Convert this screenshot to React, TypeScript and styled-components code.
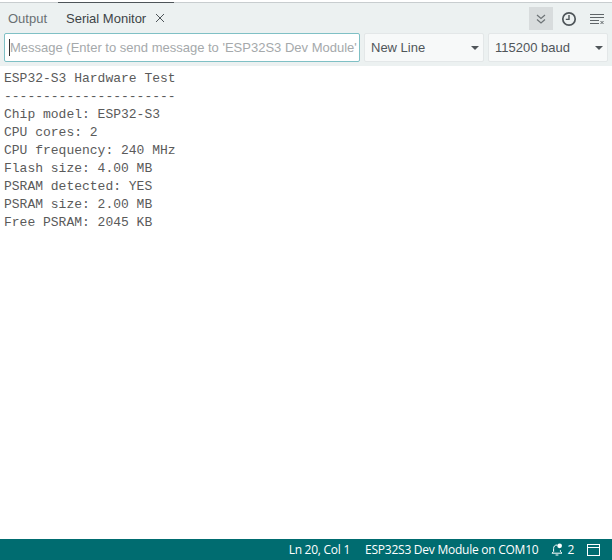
import { createGlobalStyle } from "styled-components";
import styled from "styled-components";

const lines = [
  "ESP32-S3 Hardware Test",
  "----------------------",
  "Chip model: ESP32-S3",
  "CPU cores: 2",
  "CPU frequency: 240 MHz",
  "Flash size: 4.00 MB",
  "PSRAM detected: YES",
  "PSRAM size: 2.00 MB",
  "Free PSRAM: 2045 KB",
];

const Global = createGlobalStyle`
  html, body {
    margin: 0;
    padding: 0;
    background: #fff;
  }
  * {
    box-sizing: border-box;
  }
`;

const Page = styled.div`
  width: 612px;
  height: 560px;
  display: flex;
  flex-direction: column;
  overflow: hidden;
  font-family: "Liberation Sans", Arial, sans-serif;
`;

const TopStrip = styled.div`
  height: 3px;
  background: #fff;
  border-bottom: 1px solid #c8cdcf;
  flex: none;
`;

const Header = styled.div`
  flex: none;
  height: 63px;
  background: #ecf1f1;
  display: flex;
  flex-direction: column;
`;

const TabBar = styled.div`
  height: 30px;
  display: flex;
  align-items: stretch;
  justify-content: space-between;
`;

const Tabs = styled.div`
  display: flex;
`;

const Tab = styled.div<{ $active?: boolean }>`
  display: flex;
  align-items: center;
  gap: 9px;
  padding: 0 8px 0 8px;
  font-size: 13px;
  color: ${(props) => (props.$active ? "#3e4447" : "#6a7073")};
  box-shadow: ${(props) => (props.$active ? "0 -1px 0 #4e5559" : "none")};
  width: ${(props) => (props.$active ? "116px" : "58px")};
`;

const Tools = styled.div`
  display: flex;
  align-items: center;
  padding: 4px 3px 3px 0;
  gap: 4px;
`;

const ToolBtn = styled.div<{ $on?: boolean }>`
  width: 24px;
  height: 23px;
  display: flex;
  align-items: center;
  justify-content: center;
  background: ${(props) => (props.$on ? "#d8dcdd" : "transparent")};
`;

const ToolRow = styled.div`
  flex: 1;
  display: flex;
  gap: 4px;
  padding: 0 4px;
`;

const MessageBox = styled.div`
  width: 356px;
  height: 29px;
  background: #fff;
  border: 1px solid #7fc0c5;
  border-radius: 2px;
  display: flex;
  align-items: center;
  padding-left: 4px;
  overflow: hidden;
  white-space: nowrap;
  font-size: 13px;
  color: #a5a9ab;
`;

const Caret = styled.span`
  flex: none;
  width: 1px;
  height: 17px;
  background: #333;
`;

const Select = styled.div`
  width: 120px;
  height: 29px;
  background: #f7f9f9;
  border: 1px solid #e3e7e8;
  border-radius: 2px;
  display: flex;
  align-items: center;
  justify-content: space-between;
  padding: 0 4px 0 6px;
  font-size: 13px;
  color: #50565a;
`;

const Arrow = styled.span`
  width: 0;
  height: 0;
  border-left: 4px solid transparent;
  border-right: 4px solid transparent;
  border-top: 4px solid #50565a;
`;

const Output = styled.div`
  flex: 1;
  background: #fff;
  padding: 4px 4px;
  font-family: "Liberation Mono", "Courier New", monospace;
  font-size: 13px;
  line-height: 18px;
  color: #5a5a5a;
  white-space: pre;
`;

const StatusBar = styled.div`
  flex: none;
  height: 21px;
  background: #006c70;
  color: #fff;
  display: flex;
  align-items: center;
  justify-content: flex-end;
  padding-right: 12px;
  font-family: "Open Sans", "Noto Sans", sans-serif;
  font-size: 12px;
  letter-spacing: -0.25px;
`;

const StatusItem = styled.span<{ $gap: number }>`
  display: flex;
  align-items: center;
  gap: 4px;
  margin-right: ${(props) => props.$gap}px;
`;

export default function App() {
  return (
    <Page>
      <Global />
      <TopStrip />
      <Header>
        <TabBar>
          <Tabs>
            <Tab>Output</Tab>
            <Tab $active>
              Serial Monitor
              <svg width="10" height="10" viewBox="0 0 10 10">
                <path d="M1 1l8 8M9 1l-8 8" stroke="#4e5559" strokeWidth="1" fill="none" />
              </svg>
            </Tab>
          </Tabs>
          <Tools>
            <ToolBtn $on>
              <svg width="12" height="12" viewBox="0 0 12 12">
                <path d="M2 2l4 3.5L10 2M2 6.5L6 10l4-3.5" stroke="#6d7376" strokeWidth="1.2" fill="none" />
              </svg>
            </ToolBtn>
            <ToolBtn>
              <svg width="16" height="16" viewBox="0 0 16 16">
                <circle cx="8" cy="8" r="6.2" stroke="#4e5559" strokeWidth="1.7" fill="none" />
                <path d="M8 4v4.4H4.8" stroke="#4e5559" strokeWidth="1.4" fill="none" />
              </svg>
            </ToolBtn>
            <ToolBtn>
              <svg width="16" height="14" viewBox="0 0 16 14">
                <path d="M1 2.5h14M1 5.5h14M1 8.5h9M1 11.5h9M11.5 9l3 3M14.5 9l-3 3" stroke="#5f6568" strokeWidth="1" fill="none" />
              </svg>
            </ToolBtn>
          </Tools>
        </TabBar>
        <ToolRow>
          <MessageBox>
            <Caret />
            Message (Enter to send message to 'ESP32S3 Dev Module'
          </MessageBox>
          <Select>
            New Line
            <Arrow />
          </Select>
          <Select>
            115200 baud
            <Arrow />
          </Select>
        </ToolRow>
      </Header>
      <Output>
        {lines.map((line) => (
          <div key={line}>{line}</div>
        ))}
      </Output>
      <StatusBar>
        <StatusItem $gap={15}>Ln 20, Col 1</StatusItem>
        <StatusItem $gap={13}>ESP32S3 Dev Module on COM10</StatusItem>
        <StatusItem $gap={13}>
          <svg width="12" height="13" viewBox="0 0 12 13">
            <path d="M6 2C3.6 2 2.6 3.6 2.6 5.6v3L1 10.2h10L9.4 8.6V7.2M4.6 12h2.8" stroke="#fff" strokeWidth="1" fill="none" />
            <circle cx="8.6" cy="2.8" r="2.4" fill="#fff" />
          </svg>
          2
        </StatusItem>
        <svg width="13" height="12" viewBox="0 0 13 12">
          <rect x="0.5" y="0.5" width="12" height="11" stroke="#fff" fill="none" />
          <path d="M0.5 3.5h12" stroke="#fff" />
        </svg>
      </StatusBar>
    </Page>
  );
}
